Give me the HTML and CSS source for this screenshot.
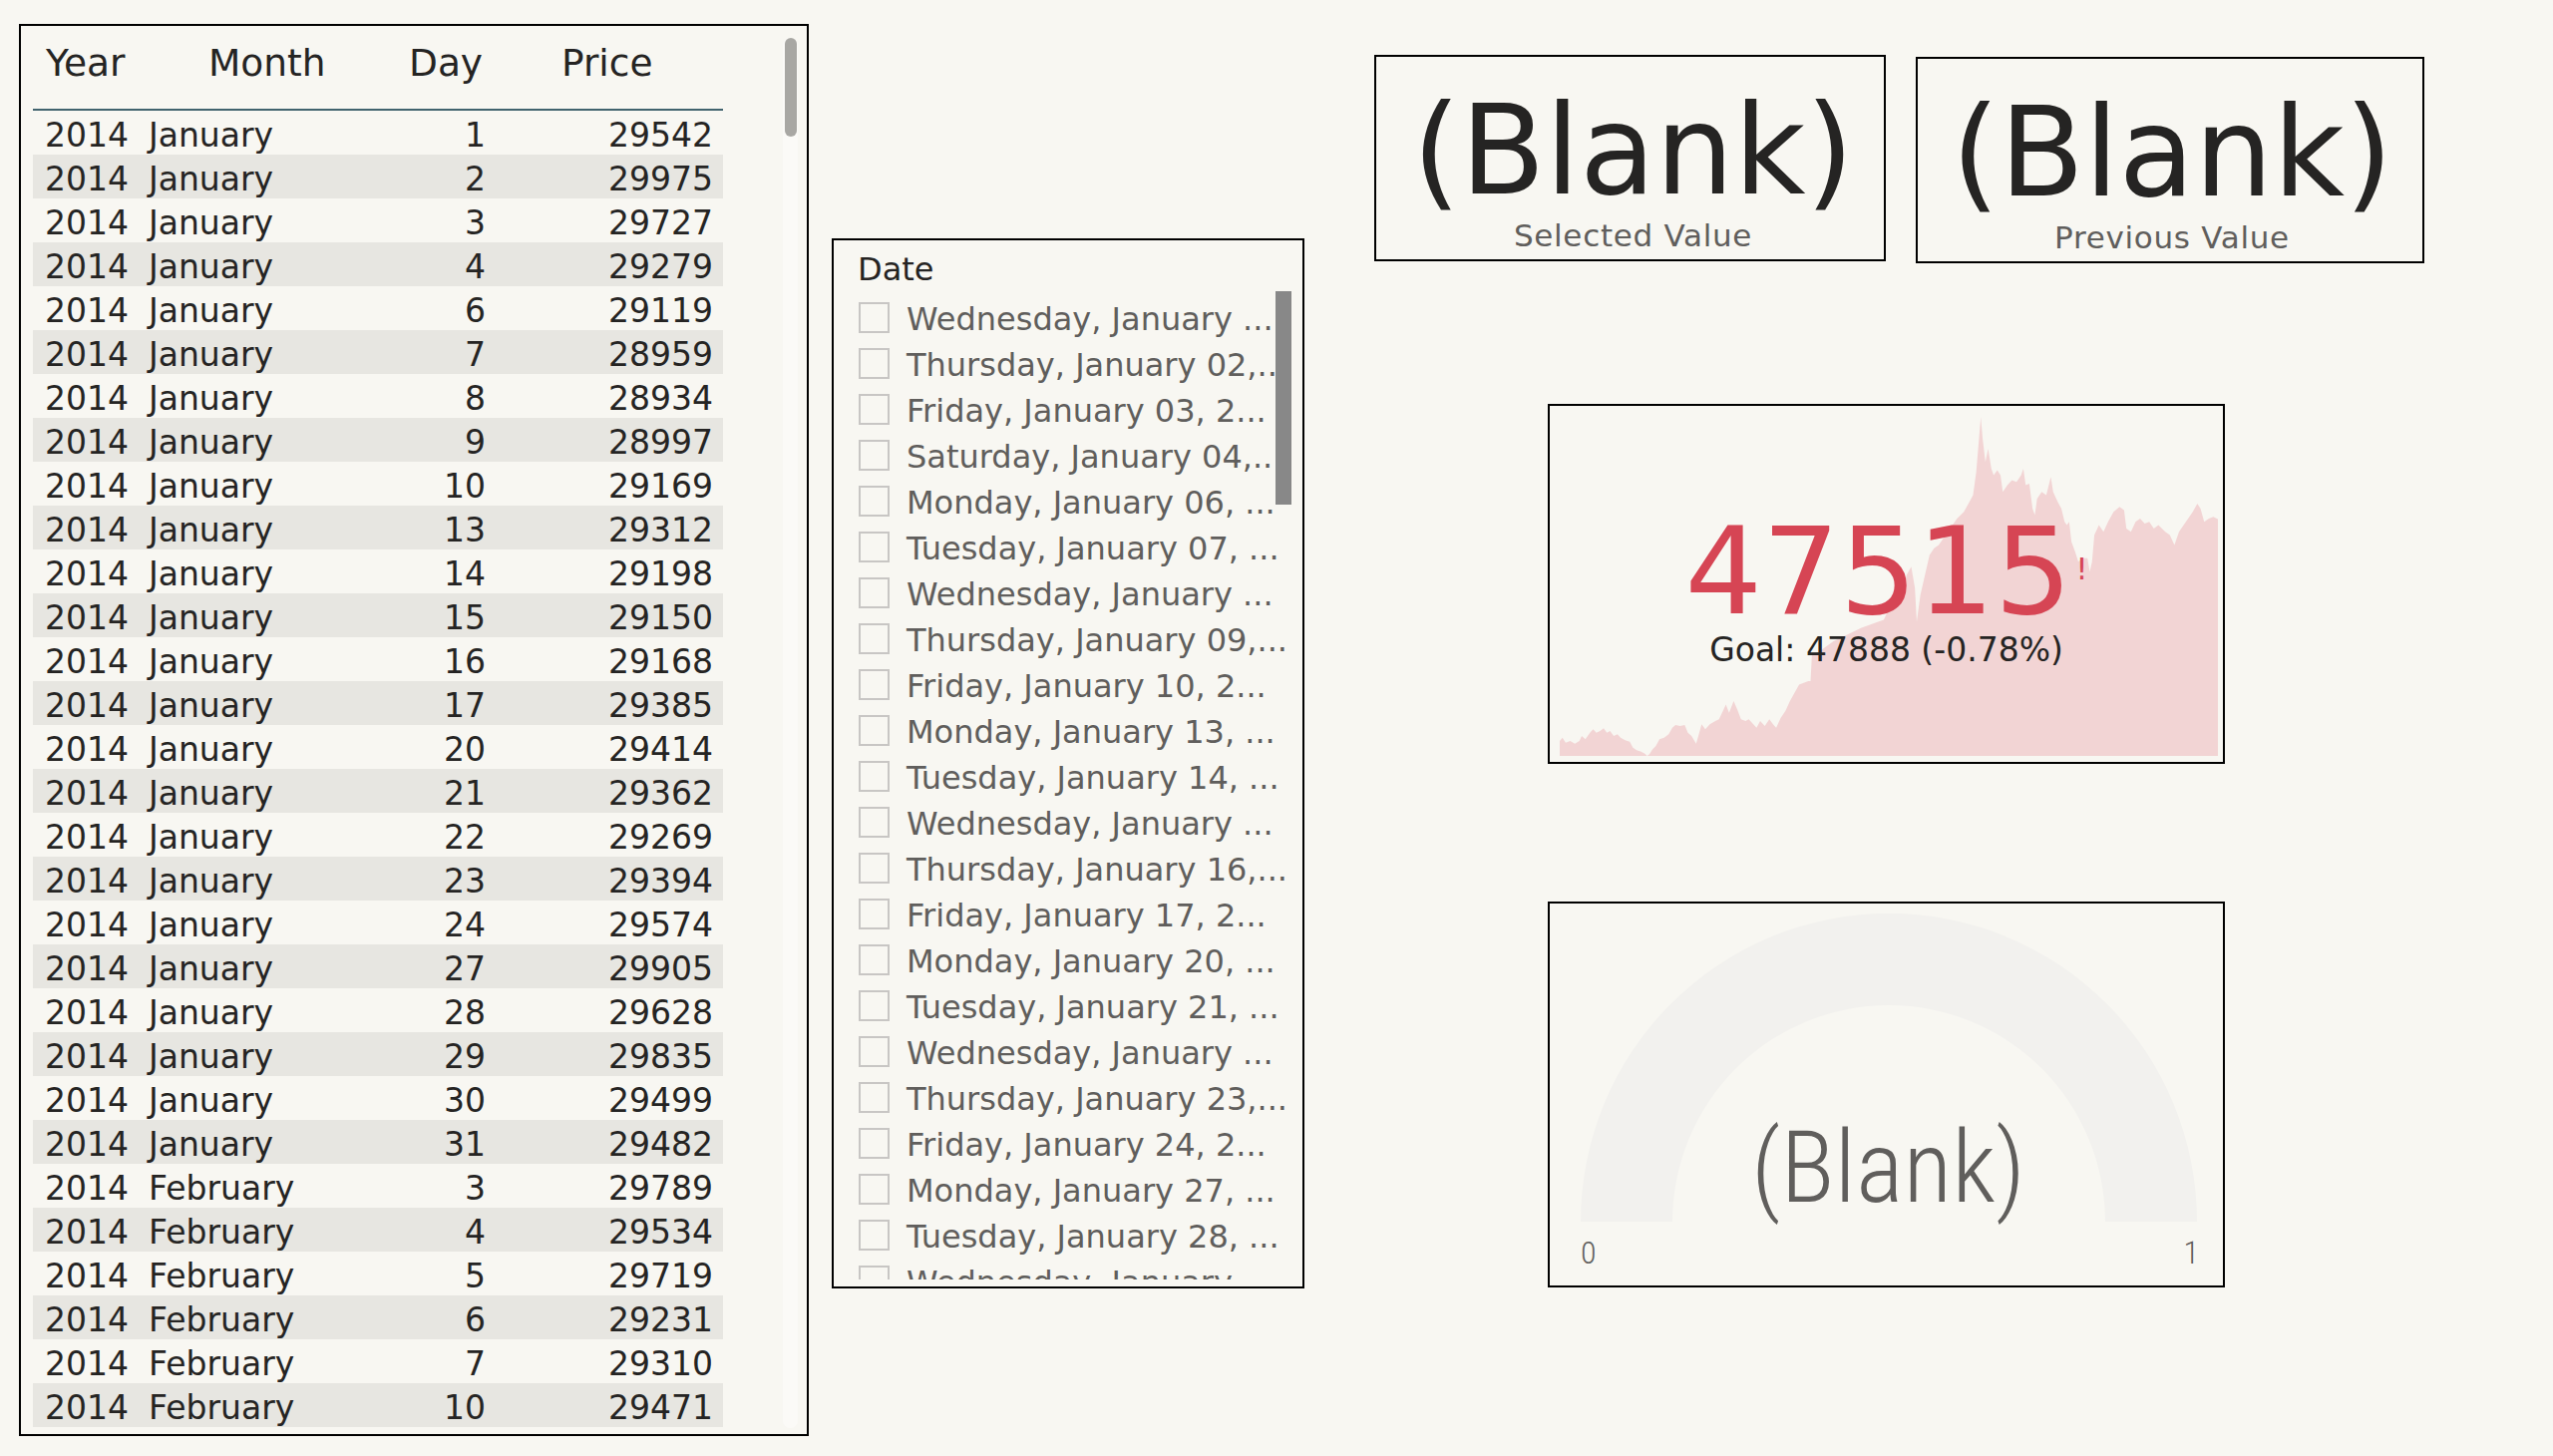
FILE: index.html
```html
<!DOCTYPE html>
<html lang="en">
<head>
<meta charset="utf-8">
<title>Report</title>
<link rel="stylesheet" href="styles.css">
</head>
<body>
<div class="canvas">
  <section class="visual table-visual">
    <div class="tbl">
      <div class="thead">
        <div class="th th-year">Year</div>
        <div class="th th-month">Month</div>
        <div class="th th-day">Day</div>
        <div class="th th-price">Price</div>
      </div>
      <div class="trow"><span class="c-year">2014</span><span class="c-month">January</span><span class="c-day">1</span><span class="c-price">29542</span></div>
      <div class="trow"><span class="c-year">2014</span><span class="c-month">January</span><span class="c-day">2</span><span class="c-price">29975</span></div>
      <div class="trow"><span class="c-year">2014</span><span class="c-month">January</span><span class="c-day">3</span><span class="c-price">29727</span></div>
      <div class="trow"><span class="c-year">2014</span><span class="c-month">January</span><span class="c-day">4</span><span class="c-price">29279</span></div>
      <div class="trow"><span class="c-year">2014</span><span class="c-month">January</span><span class="c-day">6</span><span class="c-price">29119</span></div>
      <div class="trow"><span class="c-year">2014</span><span class="c-month">January</span><span class="c-day">7</span><span class="c-price">28959</span></div>
      <div class="trow"><span class="c-year">2014</span><span class="c-month">January</span><span class="c-day">8</span><span class="c-price">28934</span></div>
      <div class="trow"><span class="c-year">2014</span><span class="c-month">January</span><span class="c-day">9</span><span class="c-price">28997</span></div>
      <div class="trow"><span class="c-year">2014</span><span class="c-month">January</span><span class="c-day">10</span><span class="c-price">29169</span></div>
      <div class="trow"><span class="c-year">2014</span><span class="c-month">January</span><span class="c-day">13</span><span class="c-price">29312</span></div>
      <div class="trow"><span class="c-year">2014</span><span class="c-month">January</span><span class="c-day">14</span><span class="c-price">29198</span></div>
      <div class="trow"><span class="c-year">2014</span><span class="c-month">January</span><span class="c-day">15</span><span class="c-price">29150</span></div>
      <div class="trow"><span class="c-year">2014</span><span class="c-month">January</span><span class="c-day">16</span><span class="c-price">29168</span></div>
      <div class="trow"><span class="c-year">2014</span><span class="c-month">January</span><span class="c-day">17</span><span class="c-price">29385</span></div>
      <div class="trow"><span class="c-year">2014</span><span class="c-month">January</span><span class="c-day">20</span><span class="c-price">29414</span></div>
      <div class="trow"><span class="c-year">2014</span><span class="c-month">January</span><span class="c-day">21</span><span class="c-price">29362</span></div>
      <div class="trow"><span class="c-year">2014</span><span class="c-month">January</span><span class="c-day">22</span><span class="c-price">29269</span></div>
      <div class="trow"><span class="c-year">2014</span><span class="c-month">January</span><span class="c-day">23</span><span class="c-price">29394</span></div>
      <div class="trow"><span class="c-year">2014</span><span class="c-month">January</span><span class="c-day">24</span><span class="c-price">29574</span></div>
      <div class="trow"><span class="c-year">2014</span><span class="c-month">January</span><span class="c-day">27</span><span class="c-price">29905</span></div>
      <div class="trow"><span class="c-year">2014</span><span class="c-month">January</span><span class="c-day">28</span><span class="c-price">29628</span></div>
      <div class="trow"><span class="c-year">2014</span><span class="c-month">January</span><span class="c-day">29</span><span class="c-price">29835</span></div>
      <div class="trow"><span class="c-year">2014</span><span class="c-month">January</span><span class="c-day">30</span><span class="c-price">29499</span></div>
      <div class="trow"><span class="c-year">2014</span><span class="c-month">January</span><span class="c-day">31</span><span class="c-price">29482</span></div>
      <div class="trow"><span class="c-year">2014</span><span class="c-month">February</span><span class="c-day">3</span><span class="c-price">29789</span></div>
      <div class="trow"><span class="c-year">2014</span><span class="c-month">February</span><span class="c-day">4</span><span class="c-price">29534</span></div>
      <div class="trow"><span class="c-year">2014</span><span class="c-month">February</span><span class="c-day">5</span><span class="c-price">29719</span></div>
      <div class="trow"><span class="c-year">2014</span><span class="c-month">February</span><span class="c-day">6</span><span class="c-price">29231</span></div>
      <div class="trow"><span class="c-year">2014</span><span class="c-month">February</span><span class="c-day">7</span><span class="c-price">29310</span></div>
      <div class="trow"><span class="c-year">2014</span><span class="c-month">February</span><span class="c-day">10</span><span class="c-price">29471</span></div>
    </div>
    <div class="tscroll-track"><div class="tscroll-thumb"></div></div>
  </section>

  <section class="visual slicer">
    <div class="slicer-title">Date</div>
    <div class="slicer-list">
      <div class="item"><span class="cb"></span><span class="lbl">Wednesday, January ...</span></div>
      <div class="item"><span class="cb"></span><span class="lbl">Thursday, January 02,...</span></div>
      <div class="item"><span class="cb"></span><span class="lbl">Friday, January 03, 2...</span></div>
      <div class="item"><span class="cb"></span><span class="lbl">Saturday, January 04,...</span></div>
      <div class="item"><span class="cb"></span><span class="lbl">Monday, January 06, ...</span></div>
      <div class="item"><span class="cb"></span><span class="lbl">Tuesday, January 07, ...</span></div>
      <div class="item"><span class="cb"></span><span class="lbl">Wednesday, January ...</span></div>
      <div class="item"><span class="cb"></span><span class="lbl">Thursday, January 09,...</span></div>
      <div class="item"><span class="cb"></span><span class="lbl">Friday, January 10, 2...</span></div>
      <div class="item"><span class="cb"></span><span class="lbl">Monday, January 13, ...</span></div>
      <div class="item"><span class="cb"></span><span class="lbl">Tuesday, January 14, ...</span></div>
      <div class="item"><span class="cb"></span><span class="lbl">Wednesday, January ...</span></div>
      <div class="item"><span class="cb"></span><span class="lbl">Thursday, January 16,...</span></div>
      <div class="item"><span class="cb"></span><span class="lbl">Friday, January 17, 2...</span></div>
      <div class="item"><span class="cb"></span><span class="lbl">Monday, January 20, ...</span></div>
      <div class="item"><span class="cb"></span><span class="lbl">Tuesday, January 21, ...</span></div>
      <div class="item"><span class="cb"></span><span class="lbl">Wednesday, January ...</span></div>
      <div class="item"><span class="cb"></span><span class="lbl">Thursday, January 23,...</span></div>
      <div class="item"><span class="cb"></span><span class="lbl">Friday, January 24, 2...</span></div>
      <div class="item"><span class="cb"></span><span class="lbl">Monday, January 27, ...</span></div>
      <div class="item"><span class="cb"></span><span class="lbl">Tuesday, January 28, ...</span></div>
      <div class="item"><span class="cb"></span><span class="lbl">Wednesday, January ...</span></div>
    </div>
    <div class="slicer-thumb"></div>
  </section>

  <div class="right-col">
    <div class="cards">
      <section class="visual card card-1">
        <div class="card-value">(Blank)</div>
        <div class="card-label">Selected Value</div>
      </section>
      <section class="visual card card-2">
        <div class="card-value">(Blank)</div>
        <div class="card-label">Previous Value</div>
      </section>
    </div>

    <section class="visual kpi">
      <svg class="kpi-trend" viewBox="52 60 1438 1045" preserveAspectRatio="none">
        <polygon class="kpi-area" points="52,1105 52,1060 58,1050 65,1065 75,1060 85,1068 95,1060 100,1045 108,1055 118,1035 125,1025 132,1035 140,1030 148,1022 155,1035 162,1030 170,1045 178,1040 185,1050 195,1058 205,1062 212,1080 220,1088 230,1092 238,1098 243,1105 248,1100 255,1085 262,1075 270,1055 280,1050 290,1040 298,1020 305,1012 315,1015 325,1012 332,1035 340,1045 350,1068 356,1040 362,1010 370,1025 380,1010 392,1000 400,995 410,965 415,950 422,975 432,940 440,965 448,995 458,1000 465,995 475,1010 482,1020 490,1000 500,1015 510,995 518,1010 525,1020 535,990 545,970 555,940 565,915 575,890 585,885 595,880 600,880 603,800 620,790 650,760 680,740 710,720 740,705 760,695 775,650 790,660 800,610 810,560 820,535 828,600 832,700 840,620 850,560 860,500 870,480 880,470 900,430 920,390 935,370 945,345 955,320 962,250 968,150 972,85 976,150 982,220 988,180 995,240 1000,260 1008,245 1015,260 1020,310 1030,290 1040,275 1050,280 1060,260 1065,240 1070,290 1078,285 1085,360 1090,380 1095,330 1105,310 1115,320 1125,265 1130,310 1140,340 1148,360 1155,400 1160,410 1165,400 1170,460 1178,490 1185,520 1195,510 1205,510 1210,550 1215,520 1220,440 1230,410 1240,430 1250,400 1262,370 1275,355 1285,365 1290,420 1300,430 1310,400 1320,390 1330,405 1340,400 1350,420 1360,410 1375,430 1385,440 1395,470 1405,430 1420,400 1435,370 1445,345 1452,360 1460,400 1470,390 1480,385 1490,392 1490,1105"/>
      </svg>
      <div class="kpi-body">
        <div class="kpi-value">47515<span class="kpi-flag">!</span></div>
        <div class="kpi-goal">Goal: 47888 (-0.78%)</div>
      </div>
    </section>

    <section class="visual gauge">
      <svg class="gauge-arc" width="618" height="309" viewBox="0 0 618 309">
        <path d="M0,309 A309,309 0 0 1 618,309 L526,309 A217,217 0 0 0 92,309 Z"/>
      </svg>
      <div class="gauge-value">(Blank)</div>
      <div class="gauge-scale"><span>0</span><span>1</span></div>
    </section>
  </div>
</div>
</body>
</html>
```

FILE: styles.css
```css
html, body {
  margin: 0;
  padding: 0;
}

body {
  background: #F8F7F2;
  font-family: "DejaVu Sans", sans-serif;
  color: #252423;
}

.canvas {
  width: 2560px;
  height: 1460px;
  box-sizing: border-box;
  padding: 24px 0 0 19px;
  display: flex;
  align-items: flex-start;
}

.visual {
  position: relative;
  box-sizing: border-box;
  border: 2px solid #000;
  background: #F8F7F2;
  flex: none;
}

/* ---------- Table ---------- */
.table-visual {
  width: 792px;
  height: 1416px;
}

.tbl {
  margin-left: 12px;
  width: 692px;
}

.thead,
.trow {
  display: grid;
  grid-template-columns: 100px 230px 140px 222px;
}

.thead {
  height: 85px;
  box-sizing: border-box;
  padding-top: 16px;
  border-bottom: 2px solid #41636E;
  font-size: 37.5px;
  line-height: 42px;
  color: #252423;
  white-space: nowrap;
}

.th-year { padding-left: 13px; }
.th-month { padding-left: 76px; }
.th-day { padding-left: 47px; }
.th-price { padding-left: 60px; }

.trow {
  height: 44px;
  box-sizing: border-box;
  padding-top: 5px;
  font-size: 33px;
  line-height: 39px;
  white-space: nowrap;
  color: #252423;
}

.trow:nth-child(odd) {
  background: #E7E6E1;
}

.c-year { padding-left: 12px; }
.c-month { padding-left: 16px; }
.c-day { text-align: right; padding-right: 16px; }
.c-price { text-align: right; padding-right: 10px; }

.tscroll-track {
  position: absolute;
  left: 764px;
  top: 12px;
  width: 15px;
  height: 1394px;
  background: #FBFAF7;
  border-radius: 7px;
}

.tscroll-thumb {
  margin-left: 2px;
  width: 12px;
  height: 99px;
  border-radius: 6px;
  background: #A8A7A3;
}

/* ---------- Slicer ---------- */
.slicer {
  width: 474px;
  height: 1053px;
  margin-left: 23px;
  margin-top: 215px;
}

.slicer-title {
  font-size: 32px;
  line-height: 40px;
  padding: 9px 0 5px 24px;
  color: #252423;
}

.slicer-list {
  height: 988px;
  overflow: hidden;
}

.item {
  display: flex;
  align-items: flex-start;
  height: 46px;
  padding-left: 25px;
  overflow: hidden;
}

.cb {
  flex: none;
  width: 31px;
  height: 31px;
  box-sizing: border-box;
  margin-top: 8px;
  border: 2px solid #C8C6C4;
}

.lbl {
  margin-left: 17px;
  padding-top: 4px;
  font-size: 32px;
  line-height: 42px;
  color: #605E5C;
  white-space: nowrap;
}

.slicer-thumb {
  position: absolute;
  left: 443px;
  top: 51px;
  width: 16px;
  height: 214px;
  background: #888888;
}

/* ---------- Right column ---------- */
.right-col {
  margin-left: 70px;
  margin-top: 31px;
  display: flex;
  flex-direction: column;
  align-items: flex-start;
}

.cards {
  display: flex;
  align-items: flex-start;
  gap: 30px;
}

.card {
  height: 207px;
  display: flex;
  flex-direction: column;
  align-items: center;
  padding-top: 32px;
}

.card-1 {
  width: 513px;
  padding-left: 6px;
}

.card-2 {
  width: 510px;
  margin-top: 2px;
  padding-left: 4px;
}

.card-value {
  font-size: 124px;
  line-height: 124px;
  color: #252423;
  white-space: nowrap;
}

.card-label {
  margin-top: 8px;
  font-size: 31px;
  line-height: 30px;
  letter-spacing: 0.7px;
  color: #605E5C;
  white-space: nowrap;
}

/* ---------- KPI ---------- */
.kpi {
  width: 679px;
  height: 361px;
  margin-left: 174px;
  margin-top: 141px;
}

.kpi-trend {
  position: absolute;
  left: 10px;
  top: 3px;
  width: 660px;
  height: 348px;
}

.kpi-area {
  fill: #F2D4D4;
}

.kpi-body {
  position: relative;
  display: flex;
  flex-direction: column;
  align-items: center;
  padding-top: 105px;
}

.kpi-value {
  font-size: 122px;
  line-height: 122px;
  color: #D64554;
  white-space: nowrap;
}

.kpi-flag {
  font-size: 30px;
  line-height: 1;
  vertical-align: 34px;
  margin-left: 4px;
}

.kpi-goal {
  margin-top: 2px;
  font-size: 33px;
  line-height: 32px;
  color: #252423;
  white-space: nowrap;
}

/* ---------- Gauge ---------- */
.gauge {
  width: 679px;
  height: 387px;
  margin-left: 174px;
  margin-top: 138px;
}

.gauge-arc {
  display: block;
  margin: 10px 0 0 31px;
}

.gauge-arc path {
  fill: #F2F1EE;
}

.gauge-value {
  position: absolute;
  left: 0;
  right: 0;
  top: 214px;
  text-align: center;
  padding-left: 4px;
  font-family: "Roboto Condensed", Roboto, "DejaVu Sans", sans-serif;
  font-weight: 300;
  font-size: 101px;
  line-height: 101px;
  color: #605E5C;
}

.gauge-scale {
  display: flex;
  justify-content: space-between;
  margin-top: 15px;
  padding: 0 24px 0 31px;
  font-family: "Roboto Condensed", Roboto, "DejaVu Sans", sans-serif;
  font-weight: 300;
  font-size: 32px;
  line-height: 32px;
  color: #605E5C;
}
```
